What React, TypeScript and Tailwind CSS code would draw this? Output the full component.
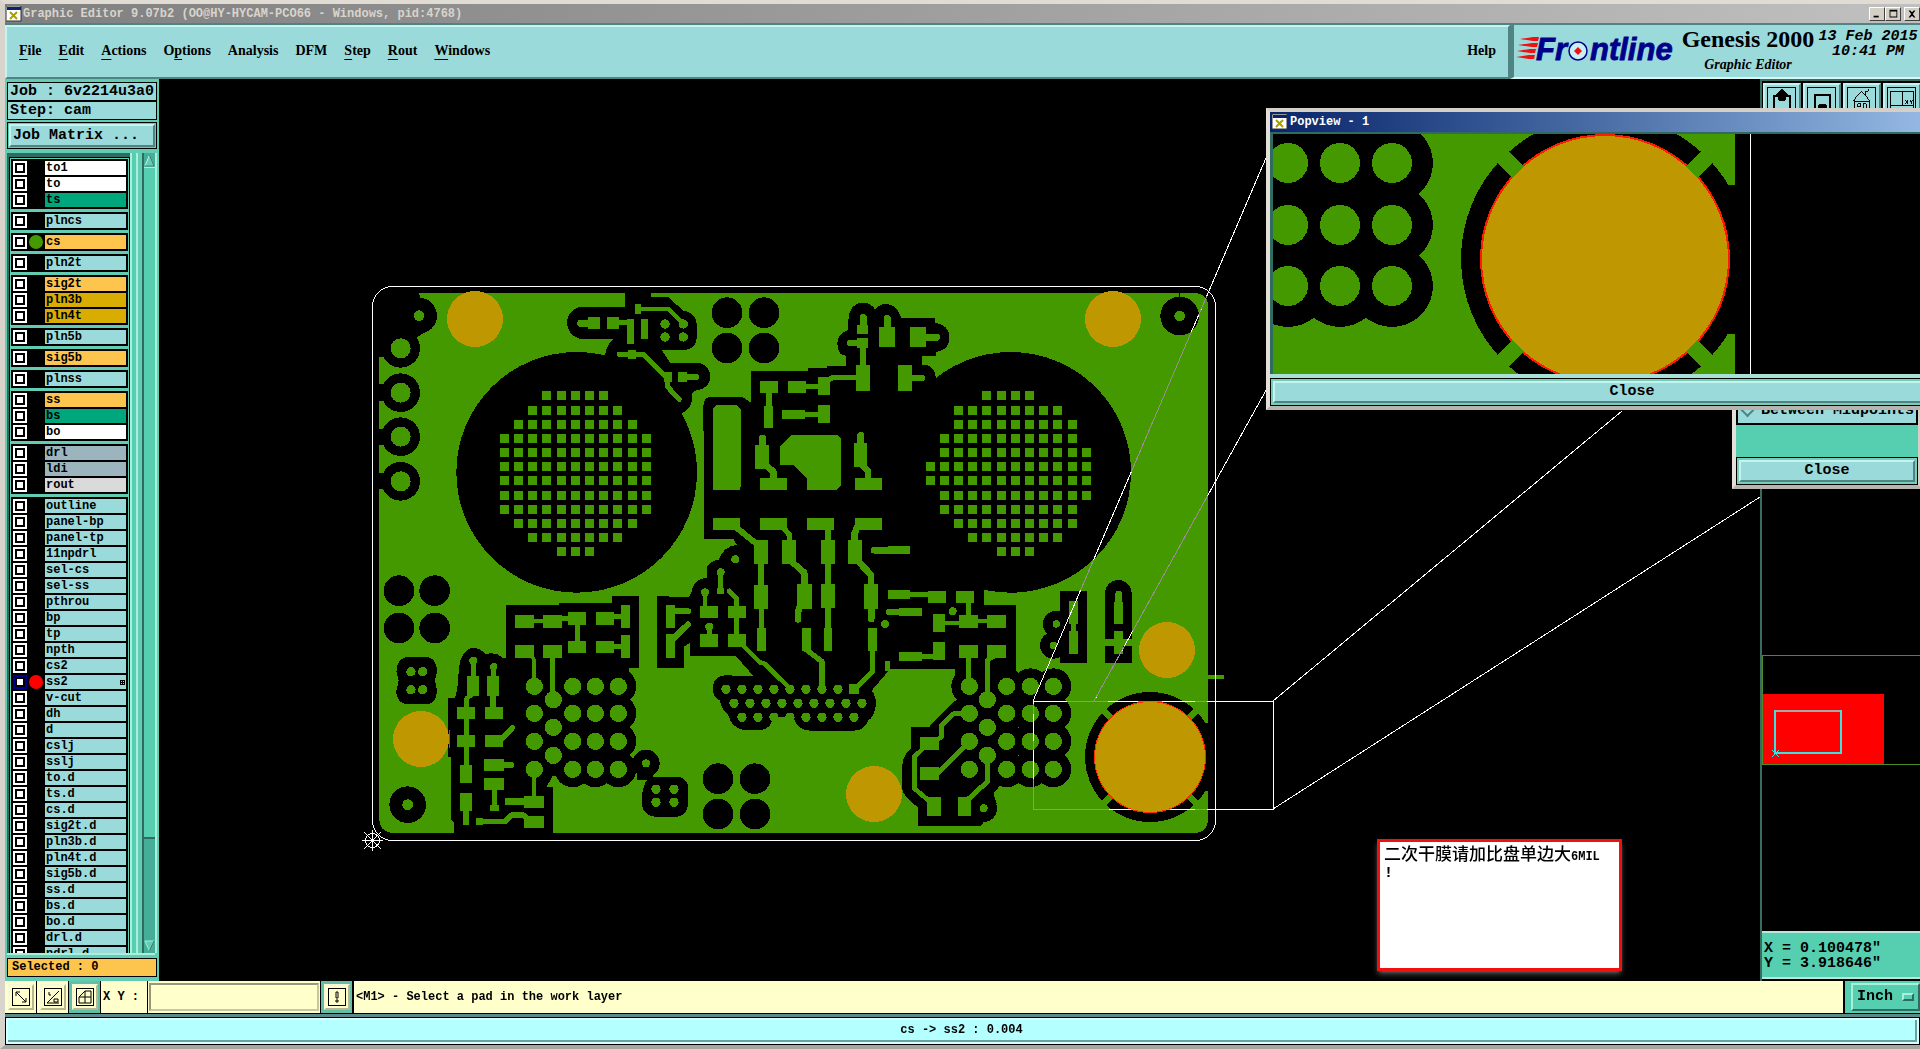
import {clsx} from "clsx";

// ------------------------------------------------------------------------------------------------

type Rect = [number, number, number, number];
type Dot = [number, number, number];
type Trace = [string, number];

interface Layer {
  name: string;
  bg?: string;
  dot?: string;
  work?: boolean;
}

interface Tile {
  x: number;
  y: number;
  voids: string[];
  voidDots: Dot[];
  voidRects: Rect[];
  rects: Rect[];
  dots: Dot[];
  traces: Trace[];
  shapes?: string[];
}

// ------------------------------------------------------------------------------------------------

const MONO = "font-['Liberation_Mono',monospace] font-bold";
const SERIF = "font-['Liberation_Serif',serif] font-bold";
const RAISED = "border-2 border-t-[#c4f4f0] border-l-[#c4f4f0] border-b-[#4f8482] border-r-[#4f8482]";

const GREEN = "#449900";
const GOLD = "#bf9700";

const menus = [
  {label: "File", key: 0},
  {label: "Edit", key: 0},
  {label: "Actions", key: 0},
  {label: "Options", key: 1},
  {label: "Analysis", key: -1},
  {label: "DFM", key: -1},
  {label: "Step", key: 0},
  {label: "Rout", key: 0},
  {label: "Windows", key: 0},
];

const ORANGE = "bg-[#fec54e]";
const WHITE = "bg-white";
const MASK = "bg-[#00a67c]";
const PLANE = "bg-[#d8ac00]";
const DRILL = "bg-[#9bb4be]";

const layerGroups: Layer[][] = [
  [{name: "to1", bg: WHITE}, {name: "to", bg: WHITE}, {name: "ts", bg: MASK}],
  [{name: "plncs"}],
  [{name: "cs", bg: ORANGE, dot: "bg-[#449900]"}],
  [{name: "pln2t"}],
  [{name: "sig2t", bg: ORANGE}, {name: "pln3b", bg: PLANE}, {name: "pln4t", bg: PLANE}],
  [{name: "pln5b"}],
  [{name: "sig5b", bg: ORANGE}],
  [{name: "plnss"}],
  [{name: "ss", bg: ORANGE}, {name: "bs", bg: MASK}, {name: "bo", bg: WHITE}],
  [{name: "drl", bg: DRILL}, {name: "ldi", bg: DRILL}, {name: "rout", bg: "bg-[#dadada]"}],
  [
    {name: "outline"},
    {name: "panel-bp"},
    {name: "panel-tp"},
    {name: "11npdrl"},
    {name: "sel-cs"},
    {name: "sel-ss"},
    {name: "pthrou"},
    {name: "bp"},
    {name: "tp"},
    {name: "npth"},
    {name: "cs2"},
    {name: "ss2", dot: "bg-[#ff0000]", work: true},
    {name: "v-cut"},
    {name: "dh"},
    {name: "d"},
    {name: "cslj"},
    {name: "sslj"},
    {name: "to.d"},
    {name: "ts.d"},
    {name: "cs.d"},
    {name: "sig2t.d"},
    {name: "pln3b.d"},
    {name: "pln4t.d"},
    {name: "sig5b.d"},
    {name: "ss.d"},
    {name: "bs.d"},
    {name: "bo.d"},
    {name: "drl.d"},
    {name: "ndrl.d"},
  ],
];

// ------------------------------------------------------------------------------------------------
// Board artwork. Every tile has its own origin and is drawn in thirds of a screen unit.

const northWest: Tile = {
  x: 360,
  y: 270,
  voids: [
    "M54 60H174L182 85L190 190L120 235L64 262H57Z",
    "M670 110H795V60H872V82H925L970 122Q1010 130 1010 165V205Q1005 240 970 240H905L930 278H1010A40 40 0 0 1 1010 360L995 370V395Q990 420 965 430L890 440L735 255Q740 225 760 207H670A48 48 0 0 1 670 110Z",
    // centre section, runs over into the other tiles
    "M1173 302H1345V294H1401V288H1457V258L1440 250Q1415 200 1465 180V150C1465 90 1525 85 1545 118C1565 92 1610 95 1623 143H1725V158Q1768 166 1768 202Q1768 240 1727 246V258H1686V285L1725 310L1800 700L1872 963V1004H1968V1200L1785 1230V1197H1590L1575 1215L1535 1262Q1550 1280 1547 1310Q1540 1345 1525 1350Q1515 1382 1480 1382H1350Q1310 1380 1300 1340H1240Q1232 1382 1195 1380H1150Q1112 1370 1105 1335Q1085 1320 1080 1292Q1058 1280 1058 1255Q1060 1218 1095 1216L1180 1218L1128 1158H990V1118L972 1130V1194H891V978L985 982L994 970Q996 930 1042 922V890Q1055 870 1075 870Q1090 830 1130 824L1120 806H1032V690L1030 410Q1030 380 1055 380H1145L1173 398Z",
  ],
  voidDots: [
    [177, 137, 54],
    [122, 235, 58],
    [122, 368, 58],
    [122, 500, 58],
    [122, 634, 58],
    [650, 607, 361],
    [1101, 128, 46],
    [1212, 128, 46],
    [1101, 234, 46],
    [1212, 234, 46],
  ],
  voidRects: [
    [55, 343, 25, 49],
    [55, 477, 25, 49],
    [55, 610, 25, 48],
  ],
  rects: [
    [684, 141, 36, 37],
    [741, 141, 36, 37],
    [777, 150, 28, 16],
    [802, 147, 20, 75],
    [826, 102, 18, 30],
    [843, 147, 21, 60],
    [803, 240, 25, 26],
    [911, 306, 25, 30],
    [954, 306, 27, 30],
    [1200, 333, 54, 36],
    [1217, 369, 18, 40],
    [1212, 408, 27, 66],
    [1185, 525, 42, 72],
    [1200, 624, 81, 36],
    [1059, 744, 81, 36],
    [1182, 810, 42, 72],
    [1194, 882, 18, 64],
    [1182, 945, 42, 72],
    [1200, 744, 81, 36],
    [1071, 955, 21, 17],
  ],
  dots: [
    [177, 137, 16],
    [122, 235, 30],
    [122, 368, 30],
    [122, 500, 30],
    [122, 634, 30],
    [915, 162, 14],
    [970, 162, 14],
    [915, 201, 14],
    [970, 201, 14],
    [1126, 868, 12],
    [1082, 907, 12],
    [1035, 967, 12],
  ],
  traces: [
    ["M663 160H690", 22],
    ["M844 117H925L968 160", 12],
    ["M778 253H850L922 325V350L958 388", 15],
    ["M975 321H1008", 18],
    ["M1207 505V530", 22],
    ["M1222 590L1240 605V630", 20],
    ["M1132 775L1190 822", 18],
    ["M1272 775L1288 795V812", 16],
    ["M1082 907V965", 14],
    ["M1035 967V1010", 14],
    ["M1108 963L1130 985V1010", 15],
  ],
  shapes: ["M1068 405H1130L1143 418V640L1140 660H1059V414Z"],
};

const northEast: Tile = {
  x: 780,
  y: 270,
  voids: [],
  voidDots: [
    [692, 607, 361],
    [1199, 138, 58],
    [430, 320, 36],
  ],
  voidRects: [[1197, 66, 3, 20]],
  rects: [
    [24, 333, 54, 36],
    [78, 342, 36, 14],
    [114, 321, 36, 54],
    [228, 285, 42, 78],
    [240, 232, 17, 55],
    [232, 205, 32, 30],
    [230, 165, 34, 27],
    [297, 171, 48, 60],
    [390, 171, 48, 60],
    [354, 285, 42, 78],
    [6, 420, 68, 26],
    [74, 426, 40, 14],
    [114, 405, 36, 54],
    [222, 519, 38, 72],
    [225, 624, 81, 36],
    [6, 810, 42, 72],
    [81, 744, 81, 36],
    [135, 780, 17, 30],
    [123, 810, 42, 72],
    [135, 882, 17, 60],
    [225, 744, 81, 36],
    [204, 810, 41, 72],
    [324, 828, 66, 24],
  ],
  dots: [[1199, 138, 16]],
  traces: [
    ["M132 335L158 323H230", 16],
    ["M210 219H240", 18],
    ["M250 142V170", 20],
    ["M322 145V175", 20],
    ["M438 202H470", 20],
    ["M396 324H425", 20],
    ["M242 497V525", 22],
    ["M248 586L264 603V630", 20],
    ["M35 875L73 908V945", 19],
    ["M232 770L224 790V812", 20],
    ["M236 875L273 915V945", 20],
    ["M282 841H330", 19],
  ],
  shapes: ["M34 495H172L183 507V645L168 660H81V627L40 585H0V528Z"],
};

const southWest: Tile = {
  x: 360,
  y: 570,
  voids: [
    "M438 105H597V98H757V78H837V294H808L775 600L578 618L560 650H579V792H283V760L273 750V560H264V383H285Q294 360 296 305C300 225 350 220 376 252Q410 245 428 264H438Z",
    "M135 262H205Q231 268 231 305L225 332L231 362Q228 402 200 402H140Q109 398 109 362L116 332L109 305Q112 268 135 262Z",
    "M870 620H955Q985 625 985 660V700Q980 738 950 740H885Q848 735 845 700Q845 640 870 620Z",
  ],
  voidDots: [
    [117, 62, 46],
    [224, 62, 46],
    [117, 174, 46],
    [224, 174, 46],
    [143, 704, 55],
    [858, 580, 41],
    [1074, 626, 46],
    [1185, 626, 46],
    [1074, 732, 46],
    [1185, 732, 46],
  ],
  voidRects: [[830, 560, 50, 70]],
  rects: [
    [465, 135, 57, 39],
    [549, 135, 57, 39],
    [522, 147, 27, 13],
    [606, 138, 18, 14],
    [624, 126, 54, 39],
    [645, 165, 15, 50],
    [624, 213, 54, 36],
    [708, 126, 54, 39],
    [708, 213, 54, 36],
    [762, 132, 22, 16],
    [762, 222, 22, 15],
    [783, 105, 27, 69],
    [783, 195, 27, 69],
    [465, 225, 57, 39],
    [549, 225, 57, 39],
    [321, 318, 36, 60],
    [291, 411, 54, 36],
    [312, 447, 15, 50],
    [291, 495, 54, 36],
    [312, 531, 15, 55],
    [300, 585, 36, 54],
    [300, 669, 36, 54],
    [309, 720, 18, 45],
    [381, 318, 36, 60],
    [391, 378, 17, 35],
    [375, 411, 54, 36],
    [375, 495, 54, 36],
    [372, 567, 60, 36],
    [372, 624, 60, 36],
    [396, 660, 15, 50],
    [390, 705, 27, 17],
    [435, 684, 60, 20],
    [492, 678, 60, 36],
    [516, 620, 12, 60],
    [348, 744, 20, 22],
    [492, 738, 60, 36],
    [918, 105, 27, 69],
    [918, 192, 27, 72],
    [1020, 108, 54, 36],
    [1104, 108, 54, 36],
    [1122, 144, 16, 50],
    [1020, 192, 54, 39],
    [1104, 192, 54, 39],
    [1182, 45, 42, 72],
    [1197, 117, 15, 60],
    [1191, 174, 27, 69],
  ],
  dots: [
    [153, 305, 14],
    [188, 305, 14],
    [153, 359, 14],
    [188, 359, 14],
    [143, 704, 16],
    [858, 580, 12],
    [888, 658, 14],
    [942, 658, 14],
    [888, 697, 14],
    [942, 697, 14],
    [340, 272, 12],
    [401, 290, 11],
    [1048, 170, 12],
  ],
  traces: [
    ["M517 260L522 270V349", 12],
    ["M578 264V389", 14],
    ["M340 272V320", 14],
    ["M401 290V320", 16],
    ["M334 375L320 385V412", 14],
    ["M425 508L457 473", 17],
    ["M432 585H453", 18],
    ["M360 755H435L455 735H490L505 748", 16],
    ["M945 124H984", 18],
    ["M940 206L984 163", 18],
    ["M1048 170V195", 15],
    ["M1148 226L1200 277L1212 280L1290 355", 14],
  ],
};

const southEast: Tile = {
  x: 780,
  y: 570,
  voids: [
    "M525 392L450 465V470H393V535Q366 555 366 600V655Q370 680 414 712V767H603L650 700L640 672L680 620L700 350Z",
    "M975 278V70A40 40 0 0 1 1055 70V278Z",
  ],
  voidDots: [
    [829, 162, 40],
    [820, 226, 40],
    [611, 716, 40],
    [1110, 561, 195],
  ],
  voidRects: [
    [839, 63, 82, 215],
    [1262, 458, 24, 205],
    [530, 240, 178, 120],
  ],
  rects: [
    [51, 42, 45, 75],
    [66, 174, 27, 69],
    [123, 42, 42, 73],
    [135, 115, 17, 60],
    [132, 174, 24, 69],
    [252, 42, 42, 75],
    [264, 174, 27, 69],
    [207, 343, 30, 28],
    [315, 274, 14, 28],
    [324, 60, 66, 27],
    [390, 66, 54, 14],
    [444, 63, 54, 36],
    [528, 63, 54, 36],
    [558, 99, 15, 40],
    [537, 135, 57, 39],
    [594, 147, 28, 12],
    [621, 135, 57, 39],
    [495, 152, 42, 13],
    [459, 132, 36, 54],
    [357, 114, 69, 24],
    [357, 246, 69, 27],
    [426, 253, 34, 13],
    [459, 216, 36, 54],
    [537, 225, 57, 39],
    [621, 225, 57, 39],
    [420, 501, 57, 39],
    [441, 681, 42, 57],
    [534, 681, 39, 57],
    [420, 591, 57, 39],
    [867, 93, 27, 69],
    [873, 160, 14, 25],
    [867, 183, 27, 69],
    [1003, 95, 26, 67],
    [1003, 183, 26, 69],
    [975, 207, 80, 21],
    [1284, 316, 47, 10],
  ],
  dots: [
    [518, 124, 12],
    [315, 162, 12],
    [611, 715, 12],
    [829, 162, 11],
    [820, 226, 11],
  ],
  traces: [
    ["M60 110L54 125V148", 20],
    ["M78 238L126 275V355", 16],
    ["M274 115V148", 19],
    ["M277 240V305L232 350", 15],
    ["M328 126H360", 19],
    ["M566 264V349", 14],
    ["M640 260L622 270V389", 14],
    ["M545 430H522L485 465V500L470 510", 14],
    ["M430 535L403 560V655L450 695", 14],
    ["M622 556V635L560 692", 15],
    ["M475 607L568 514", 15],
    ["M1016 72V100", 20],
  ],
};

const tiles = [northWest, northEast, southWest, southEast];

const padRows = [349, 430, 514, 598];

function padDots(first: number, middle: number, rest: number[], radius: number): Dot[] {
  return [
    ...padRows.flatMap((y) => [first, ...rest].map((x): Dot => [x, y, radius])),
    ...[389, 472, 556].map((y): Dot => [middle, y, radius]),
  ];
}

// BGA style pads, with the clearance drawn as bigger dots below
southWest.voidDots.push(...padDots(523, 580, [638, 706, 775], 54));
southWest.dots.push(...padDots(523, 580, [638, 706, 775], 26));
southEast.voidDots.push(...padDots(568, 622, [680, 751, 820], 54));
southEast.dots.push(...padDots(568, 622, [680, 751, 820], 26));

const connector: [number, number, number][] = [
  [1098, 358, 9],
  [1122, 400, 9],
  [1146, 442, 8],
];
connector.forEach(([x, y, count]) => {
  for (let i = 0; i < count; i++) southWest.dots.push([x + i * 48, y, 14]);
});

const gridRows = [363, 407, 450, 491, 534, 576, 619, 663, 704, 747, 789, 831];
const leftCols = [420, 462, 504, 546, 591, 633, 675, 717, 759, 804, 846];
const rightCols = [438, 480, 522, 564, 606, 651, 693, 735, 777, 819, 864, 906];
const leftSpans = [[3, 7], [2, 8], [1, 9], [0, 10], [0, 10], [0, 10], [0, 10], [0, 10], [0, 10], [1, 9], [2, 8], [4, 6]];
const rightSpans = [[4, 7], [2, 9], [2, 10], [1, 10], [1, 11], [0, 11], [0, 11], [1, 11], [1, 10], [2, 10], [3, 9], [5, 7]];

function gridRects(cols: number[], spans: number[][]): Rect[] {
  return gridRows.flatMap((y, i) => cols.slice(spans[i][0], spans[i][1] + 1).map((x): Rect => [x, y, 27, 27]));
}

northWest.rects.push(...gridRects(leftCols, leftSpans));
northEast.rects.push(...gridRects(rightCols, rightSpans));

const goldPads = [
  [475, 319],
  [1113, 319],
  [421, 739],
  [874, 794],
  [1167, 650],
];

// ------------------------------------------------------------------------------------------------

function TileVoids({tile}: {tile: Tile}) {
  return (
    <g transform={`translate(${tile.x} ${tile.y}) scale(${1 / 3})`} fill="#000">
      {tile.voids.map((d) => (
        <path key={d} d={d} />
      ))}
      {tile.voidRects.map(([x, y, w, h], i) => (
        <rect key={i} x={x} y={y} width={w} height={h} />
      ))}
      {tile.voidDots.map(([x, y, r], i) => (
        <circle key={i} cx={x} cy={y} r={r} />
      ))}
    </g>
  );
}

function TileCopper({tile}: {tile: Tile}) {
  return (
    <g transform={`translate(${tile.x} ${tile.y}) scale(${1 / 3})`} fill={GREEN}>
      {tile.rects.map(([x, y, w, h], i) => (
        <rect key={i} x={x} y={y} width={w} height={h} />
      ))}
      {tile.dots.map(([x, y, r], i) => (
        <circle key={i} cx={x} cy={y} r={r} />
      ))}
      {tile.shapes?.map((d) => <path key={d} d={d} />)}
      {tile.traces.map(([d, w]) => (
        <path key={d} d={d} fill="none" stroke={GREEN} strokeWidth={w} strokeLinecap="round" strokeLinejoin="round" />
      ))}
    </g>
  );
}

function Board() {
  return (
    <svg
      className="absolute inset-0 size-full"
      viewBox="159 79 1601 901"
      preserveAspectRatio="xMinYMin meet"
      shapeRendering="crispEdges">
      <path d="M379 293H1196Q1208 295 1208 306V821Q1206 833 1194 833H391Q380 831 379 819Z" fill={GREEN} />
      {tiles.map((tile, i) => (
        <TileVoids key={i} tile={tile} />
      ))}
      {tiles.map((tile, i) => (
        <TileCopper key={i} tile={tile} />
      ))}
      <rect x="372.5" y="286.5" width="843" height="554" rx="20" fill="none" stroke="#fff" />

      {/* thermal pad */}
      <path d="M1102 709L1198 805M1198 709L1102 805" stroke={GREEN} strokeWidth="7" />
      <circle cx="1150" cy="757" r="56" fill="#ff2a00" />
      <circle cx="1150" cy="757" r="55" fill={GOLD} />
      {goldPads.map(([x, y]) => (
        <circle key={x} cx={x} cy={y} r="28" fill={GOLD} />
      ))}
      <path d="M449 730V748" stroke="#ff2a00" />

      {/* view cone of the popup, dimmed where it crosses copper */}
      <g fill="none" stroke="#fff">
        <path d="M1275 137L1033 701" />
        <path d="M1275 374L1094 701" />
        <path d="M1033.5 701.5H1273.5V809.5H1033.5Z" />
        <path d="M1273 701L1622 411M1273 809L1760 497" />
        <g stroke="#9c8c9c">
          <path d="M1275 137L1033 701" strokeDasharray="0 173 21 18 152 96 33 900" />
          <path d="M1275 374L1094 701" strokeDasharray="0 139 155 17 63 900" />
          <path d="M1067 701.5H1108M1195 701.5H1207M1033.5 779V809.5H1109M1033.5 741V750M1033.5 704V714M1131 809.5H1170M1195 809.5H1207" />
        </g>
        <path d="M1138 701.5H1162" stroke="#40a0a0" />
      </g>

      {/* datum */}
      <g fill="none" stroke="#fff">
        <circle cx="372.5" cy="840.5" r="7" />
        <path d="M362 840.5H383M372.5 830V851M364 832L381 849M381 832L364 849" />
      </g>
    </svg>
  );
}

// ------------------------------------------------------------------------------------------------

function PopviewCanvas() {
  const cols = [1288, 1340, 1392];
  const rows = [163, 225, 286];
  return (
    <svg
      className="block h-[240px] w-full bg-black"
      viewBox="1273 134 721 240"
      preserveAspectRatio="xMinYMin slice"
      shapeRendering="crispEdges">
      <rect x="1273" y="134" width="462" height="240" fill={GREEN} />
      {rows.map((y) => cols.map((x) => <circle key={`${x}-${y}`} cx={x} cy={y} r="41" />))}
      <rect x="1273" y="134" width="130" height="152" />
      {rows.map((y) => cols.map((x) => <circle key={`${x}-${y}`} cx={x} cy={y} r="20" fill={GREEN} />))}
      <circle cx="1605" cy="259" r="144" />
      <rect x="1712" y="185" width="23" height="149" />
      <circle cx="1605" cy="259" r="125" fill="#ff1a00" />
      <path d="M1495 149L1715 369M1715 149L1495 369" stroke={GREEN} strokeWidth="16" />
      <circle cx="1605" cy="259" r="123" fill={GOLD} />
      <path d="M1750.5 134V374" stroke="#fff" />
    </svg>
  );
}

function XIcon() {
  return (
    <svg viewBox="0 0 16 16" className="size-4 shrink-0" aria-hidden="true">
      <rect x="0" y="0" width="15" height="15" fill="#fff" stroke="#333" />
      <rect x="1" y="1" width="14" height="3" fill="#0a246a" />
      <path d="M4 6L11 13M11 6L4 13" stroke="#a8a000" strokeWidth="2" />
    </svg>
  );
}

function FrontlineLogo() {
  return (
    <svg viewBox="0 0 162 32" className="h-8 w-[162px] shrink-0 overflow-visible" role="img" aria-label="Frontline">
      <path
        d="M4 6L17 4H23L22 8H17ZM2 12L16 10H22L21 14H16ZM1 18L14 16H20L19 20H14ZM0 24L13 22H19L18 26H13Z"
        fill="#f01010"
      />
      <g
        fill="#00008b"
        stroke="#00008b"
        strokeWidth="0.8"
        fontFamily="Liberation Sans, sans-serif"
        fontSize="31"
        fontWeight="700"
        fontStyle="italic">
        <text x="20" y="27">
          Fr
        </text>
        <text x="74" y="27">
          ntline
        </text>
      </g>
      <circle cx="62" cy="18" r="9" fill="#c8f0f4" stroke="#00008b" strokeWidth="1.5" />
      <path d="M62 14L66 18L62 22L58 18Z" fill="#f01010" />
    </svg>
  );
}

// ------------------------------------------------------------------------------------------------

function TitleBar() {
  return (
    <div className="flex h-[19px] shrink-0 items-center bg-linear-to-r from-[#808080] to-[#c0c0c0] pl-px">
      <XIcon />
      <h1 className={clsx(MONO, "flex-1 truncate pl-px text-[12px] text-[#d8d4cc]")}>
        Graphic Editor 9.07b2 (OO@HY-HYCAM-PCO66 - Windows, pid:4768)
      </h1>
      <div className="flex text-black">
        <WindowButton label="Minimize" d="M3 9H9V11H3Z" />
        <WindowButton label="Maximize" d="M3 2H12V11H3ZM4 4V10H11V4Z" />
        <span className="w-[3px]" />
        <WindowButton label="Close window" d="M3 3H5L7 5L9 3H11L8 7L11 11H9L7 9L5 11H3L6 7Z" />
      </div>
    </div>
  );
}

function WindowButton({label, d}: {label: string; d: string}) {
  return (
    <button
      aria-label={label}
      className="flex h-[14px] w-4 items-center justify-center border border-t-white border-l-white border-r-[#404040] border-b-[#404040] bg-[#d4d0c8]">
      <svg viewBox="0 0 14 14" className="size-3" fillRule="evenodd">
        <path d={d} />
      </svg>
    </button>
  );
}

function MenuBar() {
  return (
    <header className="flex h-14 shrink-0 border-t-2 border-[#4f8482] bg-[#9bdada] text-black">
      <nav className={clsx(RAISED, SERIF, "flex flex-1 items-center gap-[17px] px-3 pb-0.5 text-[14px]")}>
        {menus.map(({label, key}) => (
          <button key={label} className="leading-4">
            {key < 0 ? (
              label
            ) : (
              <>
                {label.slice(0, key)}
                <span className="underline underline-offset-4">{label[key]}</span>
                {label.slice(key + 1)}
              </>
            )}
          </button>
        ))}
        <button className="ml-auto leading-4">Help</button>
      </nav>
      <div className="flex w-[410px] shrink-0 overflow-hidden border-b-2 border-l-4 border-b-[#d8f8f8] border-l-[#4f8482] pl-0.5">
        <div className="pt-2">
          <FrontlineLogo />
        </div>
        <div className={clsx(SERIF, "w-[140px] shrink-0 text-center")}>
          <p className="text-[24px] leading-7 whitespace-nowrap">Genesis 2000</p>
          <p className="pt-1 text-[14px] leading-4 italic">Graphic Editor</p>
        </div>
        <div className={clsx(MONO, "w-[100px] shrink-0 pt-1 text-center text-[15px] leading-[15px] italic")}>
          <p className="whitespace-nowrap">13 Feb 2015</p>
          <p>10:41 PM</p>
        </div>
      </div>
    </header>
  );
}

// ------------------------------------------------------------------------------------------------

function LayerRow({layer}: {layer: Layer}) {
  return (
    <label className="flex h-[14px] items-center">
      <input
        type="checkbox"
        className={clsx(
          "size-[14px] shrink-0 appearance-none border-2 bg-white shadow-[inset_0_0_0_2px_black]",
          layer.work ? "border-[#000090]" : "border-white",
        )}
      />
      <span className="flex w-[18px] shrink-0 justify-center">
        {layer.dot && <span className={clsx("size-[14px] rounded-full", layer.dot)} />}
      </span>
      <span
        className={clsx("flex h-[14px] flex-1 items-center pl-px text-[12px] leading-[14px]", layer.bg ?? "bg-[#9bdada]")}>
        {layer.name}
        {layer.work && (
          <svg viewBox="0 0 5 5" className="mr-px ml-auto size-[5px]" shapeRendering="crispEdges">
            <path d="M0 0H5V5H0ZM1 1V2H2V1ZM3 1V2H4V1ZM1 3V4H2V3ZM3 3V4H4V3Z" fillRule="evenodd" />
          </svg>
        )}
      </span>
    </label>
  );
}

function LayerPanel() {
  return (
    <aside className={clsx(MONO, "flex w-[154px] shrink-0 flex-col bg-[#62cdb2] px-0.5 pt-[3px] pb-1 text-black")}>
      <div className="border border-black bg-[#9bdada] pl-0.5 text-[15px] leading-[17px] whitespace-nowrap">
        Job : 6v2214u3a0
      </div>
      <div className="border border-black bg-[#9bdada] pl-0.5 text-[15px] leading-[17px]">Step: cam</div>
      <div className="mt-0.5 border border-black p-px">
        <button className={clsx(RAISED, "block w-full bg-[#9bdada] pl-0.5 text-left text-[15px] leading-[19px]")}>
          Job Matrix ...
        </button>
      </div>

      <div className="mt-1 flex min-h-0 flex-1">
        <div className="flex min-h-0 flex-1 flex-col overflow-hidden border-t-4 border-l-2 border-[#2f6b60]">
          <div className="min-h-0 flex-1 overflow-hidden border-x border-t border-black px-px pt-px">
            {layerGroups.map((group) => (
              <div key={group[0].name} className="mb-[3px] flex flex-col gap-0.5 border-2 border-black bg-black">
                {group.map((layer) => (
                  <LayerRow key={layer.name} layer={layer} />
                ))}
              </div>
            ))}
          </div>
        </div>
        <div className="mr-1 w-2 border-x-2 border-[#a8f0dc] bg-[#56cfb0]" />
        <div className="flex w-[15px] flex-col border-r-2 border-l-2 border-r-[#a8f0dc] border-l-[#2f6b60] bg-[#45ae98]">
          <svg viewBox="0 0 11 14" className="h-[14px] w-full">
            <path d="M5.5 2L10 13H1Z" fill="#62cdb2" stroke="#c4f4f0" />
            <path d="M5.5 2L10 13H1" fill="none" stroke="#2f6b60" />
          </svg>
          <div className="h-[84%] border-t border-b-2 border-t-[#a8f0dc] border-b-[#2f6b60] bg-[#56cfb0]" />
          <svg viewBox="0 0 11 14" className="mt-auto h-[14px] w-full">
            <path d="M1 2H10L5.5 12Z" fill="#62cdb2" stroke="#a8f0dc" />
            <path d="M10 2L5.5 12" stroke="#2f6b60" />
          </svg>
        </div>
      </div>
      <div className="mr-0.5 h-[5px] border-t-2 border-[#a8f0dc]" />
      <div className="border border-black bg-[#fec54e] pl-1 text-[12px] leading-[17px]">Selected : 0</div>
    </aside>
  );
}

// ------------------------------------------------------------------------------------------------

const viewTools = [
  {label: "Pan up", icon: <path d="M8 28V10H12M21 10H25V28" strokeWidth="2" />, head: "M16.5 3L23 9H20V14H13V9H10Z"},
  {label: "Screen", icon: <path d="M9 9H25V24H9Z" strokeWidth="2" />, head: "M13 19H21V24H13Z"},
  {label: "Home", icon: <path d="M7 15L16 5L25 15M9 14V28M24 14V28M20 9V5H23V3M12 18H15V21H12ZM18 28V18H21V28M9 15H24" />},
  {label: "Window XY", icon: <path d="M5 5H28V26H5ZM17 5V20M5 20H28M20 14L23 18M23 14L20 18M25 14L26 16L28 14M26 16V18" />},
];

function ViewPanel() {
  return (
    <aside className="flex w-[160px] shrink-0 flex-col overflow-hidden border-l-2 border-[#3a6b60] bg-black">
      <div className="flex shrink-0 gap-0.5 border-t-2 border-[#3a6b60] pt-0.5 pl-px">
        {viewTools.map(({label, icon, head}) => (
          <button key={label} aria-label={label} className={clsx(RAISED, "h-10 w-[38px] shrink-0 bg-[#9bdada] p-px")}>
            <svg viewBox="0 0 33 34" className="size-full" fill="none" stroke="#000" shapeRendering="crispEdges">
              <rect x="1.5" y="1.5" width="29" height="31" />
              {icon}
              {head && <path d={head} fill="#000" />}
            </svg>
          </button>
        ))}
      </div>
      <svg className="min-h-0 w-full flex-1" viewBox="1762 123 158 810" preserveAspectRatio="xMinYMax meet" shapeRendering="crispEdges">
        <rect x="1762" y="695" width="122" height="71" fill="#f00" />
        <path d="M1930 656.5H1762.5V766.5H1930" fill="none" stroke="#4c8c28" />
        <rect x="1775" y="712" width="66" height="43" fill="none" stroke="#40e0e0" strokeWidth="2" />
        <path d="M1776 712H1840" stroke="#a8a8a8" strokeWidth="2" />
        <path d="M1772 752L1779 759M1779 752L1772 759" stroke="#40e0e0" />
      </svg>
      <div
        className={clsx(
          MONO,
          "shrink-0 border-y-2 border-[#b8e8dc] bg-[#56cfb0] pt-2 pb-1.5 pl-0.5 text-[15px] leading-[15px] whitespace-pre text-black",
        )}>
        <p>X = 0.100478"</p>
        <p>Y = 3.918646"</p>
      </div>
      <div className="h-0.5 shrink-0" />
    </aside>
  );
}

// ------------------------------------------------------------------------------------------------

function ToolButton({label, d, active}: {label: string; d: string; active?: boolean}) {
  return (
    <div className={clsx("flex w-[31px] items-center justify-center", active ? "bg-[#62bfa6]" : "bg-[#ffffcc]")}>
      <button
        aria-label={label}
        className="size-[26px] border-2 border-t-[#f8f8d8] border-l-[#f8f8d8] border-r-[#b8b890] border-b-[#b8b890] bg-[#ffffcc] p-px">
        <svg viewBox="0 0 20 20" className="size-full" fill="none" stroke="#000">
          <rect x="1.5" y="1.5" width="17" height="17" />
          <path d={d} />
        </svg>
      </button>
    </div>
  );
}

function CommandBar() {
  return (
    <div className={clsx(MONO, "flex h-8 shrink-0 gap-px bg-black text-[12px] text-black")}>
      <ToolButton label="Rubber band" d="M5 9V5H9M5 5L15 15M11 15H15V11" />
      <ToolButton label="Angle" d="M4 16L16 4M4 16H16M6 5V8H8M11 12H15V15H11Z" />
      <ToolButton label="Grid" active d="M4 16V10L10 4H16V16ZM4 10H16M10 4V16" />
      <div className="flex flex-1 items-center bg-[#ffffcc]">
        <label htmlFor="xy" className="w-[46px] pl-0.5 whitespace-pre">
          X Y :
        </label>
        <div className="flex h-full w-[174px] items-center border-x border-black px-px">
          <input
            id="xy"
            type="text"
            autoFocus
            className="h-[28px] w-full border-2 border-t-[#98987a] border-l-[#98987a] border-r-[#c8c8a0] border-b-[#c8c8a0] bg-[#ffffcc] px-1 outline-none"
          />
        </div>
        <div className="flex h-full border-r-2 border-black">
          <ToolButton label="Alert" active d="M9 5H11V11H9ZM9 13H11V15H9Z" />
        </div>
        <p className="pl-0.5">&lt;M1&gt; - Select a pad in the work layer</p>
      </div>
      <div className="ml-px flex w-[75px] shrink-0 items-center bg-[#56cfb0] pl-1.5">
        <button className="flex h-7 w-full items-center justify-between border-2 border-t-[#a8f0dc] border-r-[#2f6b60] border-b-[#2f6b60] border-l-[#a8f0dc] px-1 text-[15px]">
          Inch
          <span className="h-2 w-3 border-2 border-t-[#a8f0dc] border-r-[#2f6b60] border-b-[#2f6b60] border-l-[#a8f0dc]" />
        </button>
      </div>
    </div>
  );
}

// ------------------------------------------------------------------------------------------------

function CloseButton() {
  return (
    <div className="border border-black bg-[#78cdb8] p-0.5">
      <button className={clsx(RAISED, MONO, "block w-full bg-[#9bdada] text-center text-[15px] leading-[18px]")}>
        Close
      </button>
    </div>
  );
}

function Popview() {
  return (
    <section className="absolute top-[104px] left-[1261px] w-[732px] border-4 border-t-[#d4d0c8] border-r-[#d4d0c8] border-b-[#b8b4b0] border-l-[#e4e0d8] bg-[#2f6b60] text-black">
      <div className="flex h-5 items-center bg-linear-to-r from-[#0a246a] to-[#a6caf0] pl-0.5">
        <XIcon />
        <h2 className={clsx(MONO, "pl-0.5 text-[12px] text-white")}>Popview - 1</h2>
      </div>
      <div className="pt-0.5 pl-[3px]">
        <PopviewCanvas />
      </div>
      <div className="h-1 bg-[#a8e0d8]" />
      <CloseButton />
    </section>
  );
}

function PointModeDialog() {
  return (
    <section className="absolute top-[376px] left-[1727px] w-[190px] border-4 border-r-[#d4d0c8] border-b-[#b8b4b0] border-l-[#e4e0d8] bg-[#56cfb0] text-black">
      <label
        className={clsx(MONO, "flex h-[41px] items-end border-2 border-black bg-[#9bdada] pb-1 text-[15px] leading-[17px] whitespace-nowrap")}>
        <input
          type="radio"
          className="mr-2 ml-1 size-[11px] shrink-0 -translate-y-1 rotate-45 appearance-none border-2 border-t-[#d8f8f8] border-r-[#4f8482] border-b-[#4f8482] border-l-[#d8f8f8]"
        />
        Between Midpoints
      </label>
      <div className="pt-8">
        <CloseButton />
      </div>
    </section>
  );
}

function Note() {
  return (
    <div className="absolute top-[835px] left-[1372px] h-[132px] w-[245px] border-[3px] border-[#f01010] bg-white px-1 py-0.5 font-['Noto_Sans_CJK_SC',sans-serif] text-[17px] leading-[18px] font-medium text-black shadow-md shadow-white/30">
      <p className="whitespace-nowrap">
        二次干膜请加比盘单边大
        <span className={clsx(MONO, "text-[12px]")}>6MIL</span>
      </p>
      <p className={clsx(MONO, "text-[15px] leading-4")}>!</p>
    </div>
  );
}

// ------------------------------------------------------------------------------------------------

export default function App() {
  return (
    <div className="relative flex h-screen w-full flex-col overflow-hidden border-t-4 border-b-4 border-l-[5px] border-t-[#e0dcd4] border-b-[#a8a4a0] border-l-[#d8d4cc] bg-black">
      <TitleBar />
      <MenuBar />
      <main className="flex min-h-0 flex-1">
        <LayerPanel />
        <div className="relative min-w-0 flex-1">
          <Board />
        </div>
        <ViewPanel />
      </main>
      <CommandBar />
      <footer className="mt-px shrink-0 border-t-[3px] border-[#5a8a8a] bg-black p-px">
        <div className="border-2 border-[#d8ffff]">
          <p
            className={clsx(
              MONO,
              "border-r-2 border-b-2 border-[#6aa0a0] bg-[#b4ffff] text-center text-[12px] leading-5 text-black",
            )}>
            cs -&gt; ss2 : 0.004
          </p>
        </div>
      </footer>
      <PointModeDialog />
      <Popview />
      <Note />
    </div>
  );
}
